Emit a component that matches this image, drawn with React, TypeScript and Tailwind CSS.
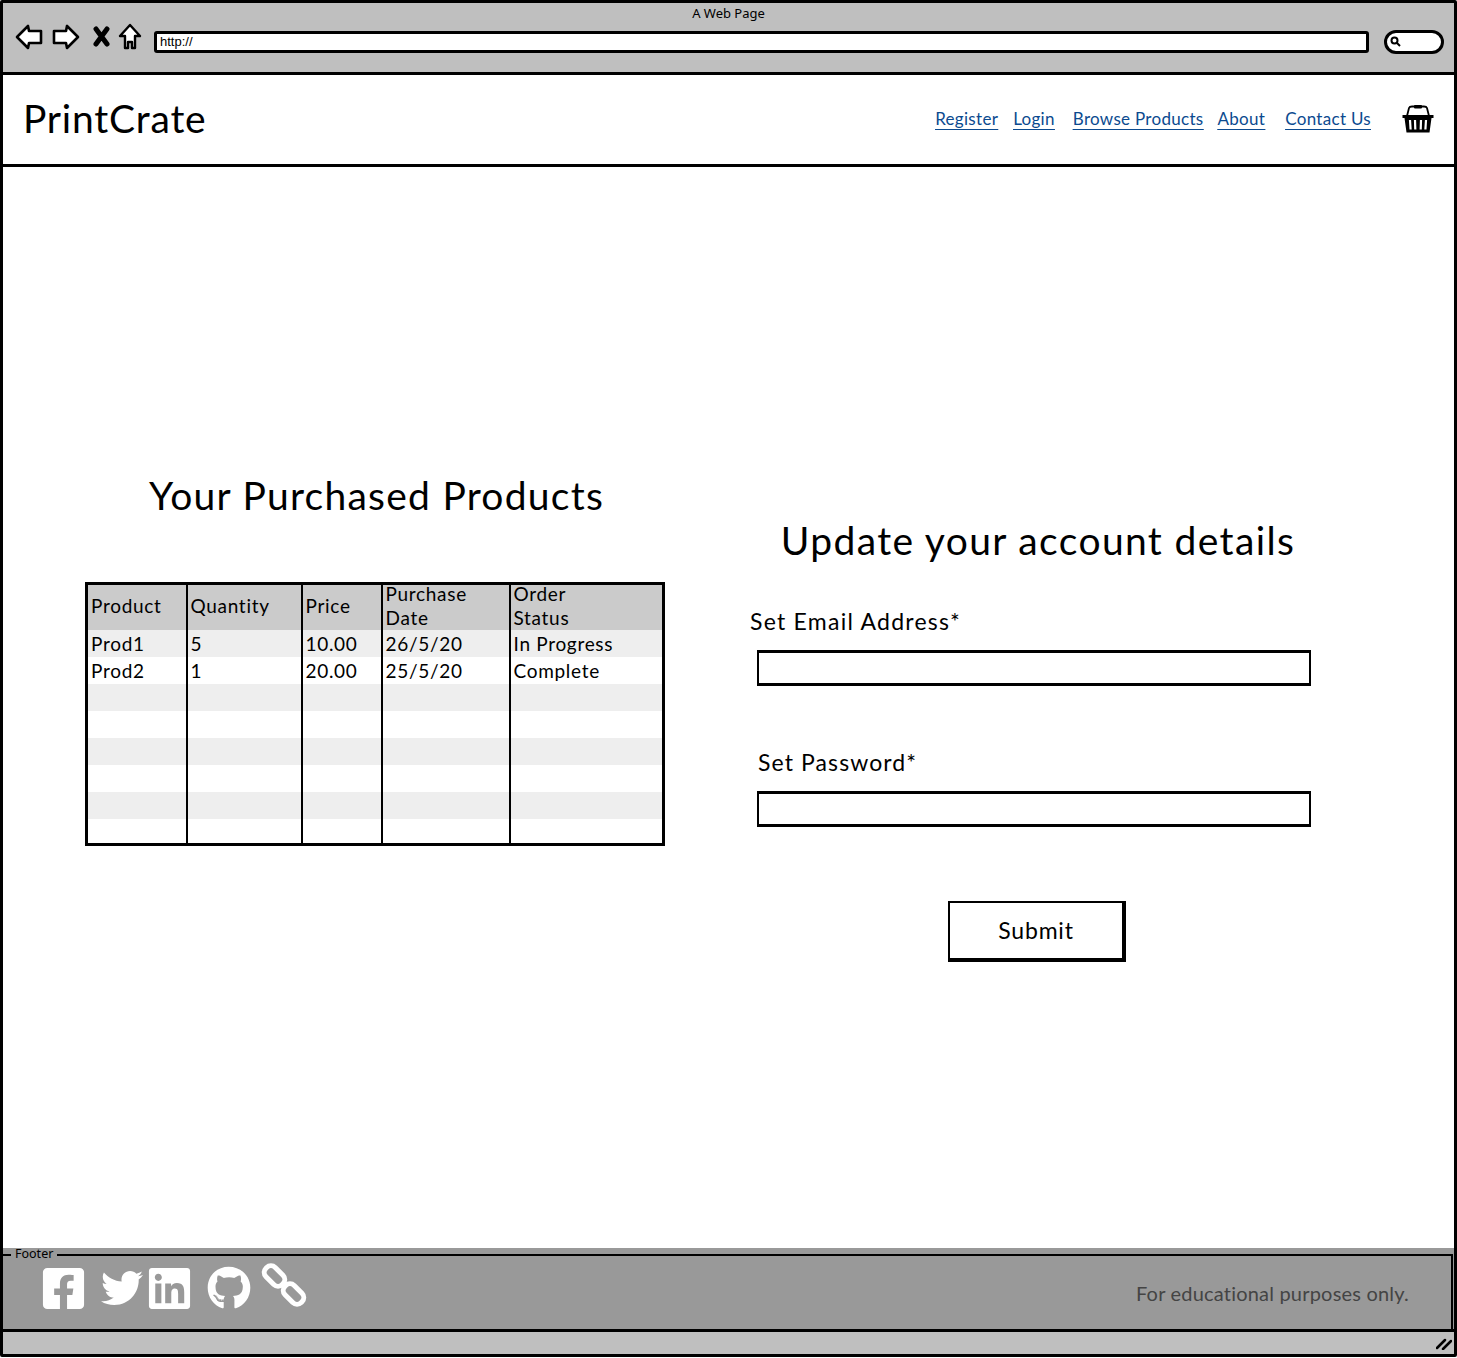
import { FaFacebookSquare, FaTwitter, FaLinkedin, FaGithub } from 'react-icons/fa';

const columns = [
  { label: 'Product', width: 'w-[100px]' },
  { label: 'Quantity', width: 'w-[115px]' },
  { label: 'Price', width: 'w-[80px]' },
  { label: 'Purchase Date', width: 'w-[128px]' },
  { label: 'Order Status', width: 'w-[154px]' },
];

const rows = [
  ['Prod1', '5', '10.00', '26/5/20', 'In Progress'],
  ['Prod2', '1', '20.00', '25/5/20', 'Complete'],
  ['', '', '', '', ''],
  ['', '', '', '', ''],
  ['', '', '', '', ''],
  ['', '', '', '', ''],
  ['', '', '', '', ''],
  ['', '', '', '', ''],
];

function BrowserIcons() {
  return (
    <div className="flex items-center gap-[9px] -mt-[3px]">
      <svg width="28" height="26" viewBox="0 0 28 26" fill="white" stroke="black" strokeWidth="2.6" strokeLinejoin="round">
        <path d="M2 13 L13 2 L14 7 L26 7 L26 19 L14 19 L13 24 Z" />
      </svg>
      <svg width="28" height="26" viewBox="0 0 28 26" fill="white" stroke="black" strokeWidth="2.6" strokeLinejoin="round">
        <path d="M26 13 L15 2 L14 7 L2 7 L2 19 L14 19 L15 24 Z" />
      </svg>
      <svg width="18" height="22" viewBox="0 0 18 22" className="ml-[4px]" fill="none" stroke="black" strokeWidth="5" strokeLinecap="round">
        <path d="M3 3 L14 18 M14 3 L3 18" />
      </svg>
      <svg width="24" height="28" viewBox="0 0 24 28" className="-ml-[2px]" fill="white" stroke="black" strokeWidth="2.4" strokeLinejoin="round">
        <path d="M12 2 L22 13 L17 13 L17 25 L14 25 L14 19 L10 19 L10 25 L7 25 L7 13 L2 13 Z" />
      </svg>
    </div>
  );
}

function BasketIcon() {
  return (
    <svg width="32" height="28" viewBox="0 0 32 28" className="-mt-[1px]">
      <path d="M5 11 L7 3 Q7.500 1.500 10 1.500 L22 1.500 Q24.500 1.500 25 3 L27 11" fill="none" stroke="black" strokeWidth="1.800" />
      <rect x="12" y="0" width="8" height="3.500" rx="1" fill="black" />
      <path d="M0.500 10 L31.500 10 L31.500 13 L29.500 13 L27.500 27.500 L4.500 27.500 L2.500 13 L0.500 13 Z" fill="black" />
      <path d="M8 15 L8.600 24.500 M13 15 L13.300 24.500 M19 15 L18.700 24.500 M24 15 L23.400 24.500" stroke="white" strokeWidth="2.200" />
    </svg>
  );
}

function ChainIcon() {
  return (
    <svg width="46" height="46" viewBox="0 0 46 46" fill="none" stroke="white" strokeWidth="5">
      <rect x="2" y="7.500" width="23" height="13" rx="6" transform="rotate(45 13.500 14)" />
      <rect x="21" y="25.500" width="23" height="13" rx="6" transform="rotate(45 32.500 32)" />
    </svg>
  );
}

export default function App() {
  return (
    <div className="w-[1457px] h-[1357px] border-[3px] border-black flex flex-col bg-white text-black font-['Lato',sans-serif] overflow-hidden rounded-[2px]">
      <div className="h-[72px] shrink-0 bg-[#bfbfbf] border-b-[3px] border-black relative">
        <p className="absolute top-[2px] left-0 right-0 text-center text-[13px] leading-[16px] font-['Noto_Sans',sans-serif]">A Web Page</p>
        <div className="flex items-center h-full pl-[12px] pr-[10px] pt-[1px]">
          <BrowserIcons />
          <div className="ml-[12px] w-[1215px] h-[22px] mt-[8px] bg-white border-[3px] border-black rounded-[3px] flex items-center pl-[3px] text-[13px] font-['Liberation_Sans',sans-serif]">http://</div>
          <div className="ml-[15px] w-[60px] h-[24px] mt-[7px] bg-white border-[3px] border-black rounded-[14px] flex items-center pl-[3px]">
            <svg width="11" height="11" viewBox="0 0 11 11" fill="none" stroke="black" strokeWidth="2">
              <circle cx="4.500" cy="4.500" r="3" />
              <path d="M7 7 L10 10" />
            </svg>
          </div>
        </div>
      </div>

      <header className="h-[92px] shrink-0 border-b-[3px] border-black flex items-center pl-[20px] pr-[20px]">
        <h1 className="text-[39px] leading-[48px] font-normal tracking-[0.8px] -mt-[4px]">PrintCrate</h1>
        <nav className="ml-auto flex items-center text-[17px] tracking-[0.3px] text-[#0b4a8f] underline underline-offset-[4px] -mt-[1px]">
          <a className="mr-[15px]">Register</a>
          <a className="mr-[18px]">Login</a>
          <a className="mr-[14px]">Browse Products</a>
          <a className="mr-[20px]">About</a>
          <a className="mr-[31px]">Contact Us</a>
          <BasketIcon />
        </nav>
      </header>

      <main className="flex-1 flex">
        <section className="w-[579px] ml-[82px] pt-[306px]">
          <h2 className="text-center text-[39px] leading-[44px] font-normal tracking-[1.25px] whitespace-nowrap translate-x-[2px]">Your Purchased Products</h2>
          <table className="mt-[65px] w-[580px] table-fixed border-collapse border-[3px] border-black text-[19px] tracking-[0.7px]">
            <thead>
              <tr className="bg-[#cbcbcb] h-[45px] leading-[24px]">
                {columns.map((c, i) => (
                  <th key={c.label} className={`${c.width} font-normal text-left align-middle pl-[3px] ${i > 0 ? 'border-l-2 border-black' : ''}`}>
                    <div className="-mt-[3px]">
                      {c.label.split(' ').map((word) => (
                        <div key={word}>{word}</div>
                      ))}
                    </div>
                  </th>
                ))}
              </tr>
            </thead>
            <tbody>
              {rows.map((row, r) => (
                <tr key={r} className={`${r === 7 ? 'h-[25px]' : 'h-[27px]'} ${r % 2 === 0 ? 'bg-[#eeeeee]' : 'bg-white'}`}>
                  {row.map((cell, i) => (
                    <td key={i} className={`pl-[3px] p-0 leading-[24px] ${i > 0 ? 'border-l-2 border-black' : ''}`}>{cell}</td>
                  ))}
                </tr>
              ))}
            </tbody>
          </table>
        </section>

        <section className="w-[554px] ml-[93px] pt-[351px]">
          <h2 className="text-center text-[39px] leading-[44px] font-normal tracking-[1.37px] translate-x-[4px] whitespace-nowrap">Update your account details</h2>
          <label className="block mt-[45px] -ml-[7px] text-[23px] leading-[28px] tracking-[1.25px]">Set Email Address*</label>
          <div className="mt-[15px] h-[36px] border-2 border-t-[3px] border-b-[3px] border-black bg-white" />
          <label className="block mt-[62px] ml-[1px] text-[23px] leading-[28px] tracking-[1.1px]">Set Password*</label>
          <div className="mt-[15px] h-[36px] border-2 border-t-[3px] border-b-[3px] border-black bg-white" />
          <button className="block mt-[74px] ml-[191px] w-[178px] h-[61px] bg-white border-2 border-black border-r-[4px] border-b-[4px] text-[23px] tracking-[0.8px]">Submit</button>
        </section>
      </main>

      <footer className="h-[84px] shrink-0 bg-[#999999] border-b-[3px] border-black pt-[6px] relative">
        <span className="absolute left-[8px] top-0 px-[4px] bg-[#999999] text-[12.500px] leading-[12px] font-['Noto_Sans',sans-serif]">Footer</span>
        <div className="h-full border-t-[2px] border-r-[2px] border-black mr-[1px] flex items-center pl-[37px] pr-[42px] pb-[9px]">
          <FaFacebookSquare className="text-white text-[47px]" />
          <FaTwitter className="text-white text-[42px] ml-[14px]" />
          <FaLinkedin className="text-white text-[47px] ml-[3px]" />
          <FaGithub className="text-white text-[44px] ml-[14px]" />
          <div className="ml-[10px] -mt-[6px]"><ChainIcon /></div>
          <p className="ml-auto text-[20px] text-[#444444] mt-[10px] tracking-[0.2px]">For educational purposes only.</p>
        </div>
      </footer>

      <div className="h-[22px] shrink-0 bg-[#bfbfbf] flex items-center justify-end pr-[2px]">
        <svg width="16" height="14" viewBox="0 0 16 14" stroke="black" strokeWidth="2.500" strokeLinecap="round">
          <path d="M1 12 L9 4 M7 13 L15 5" />
        </svg>
      </div>
    </div>
  );
}
